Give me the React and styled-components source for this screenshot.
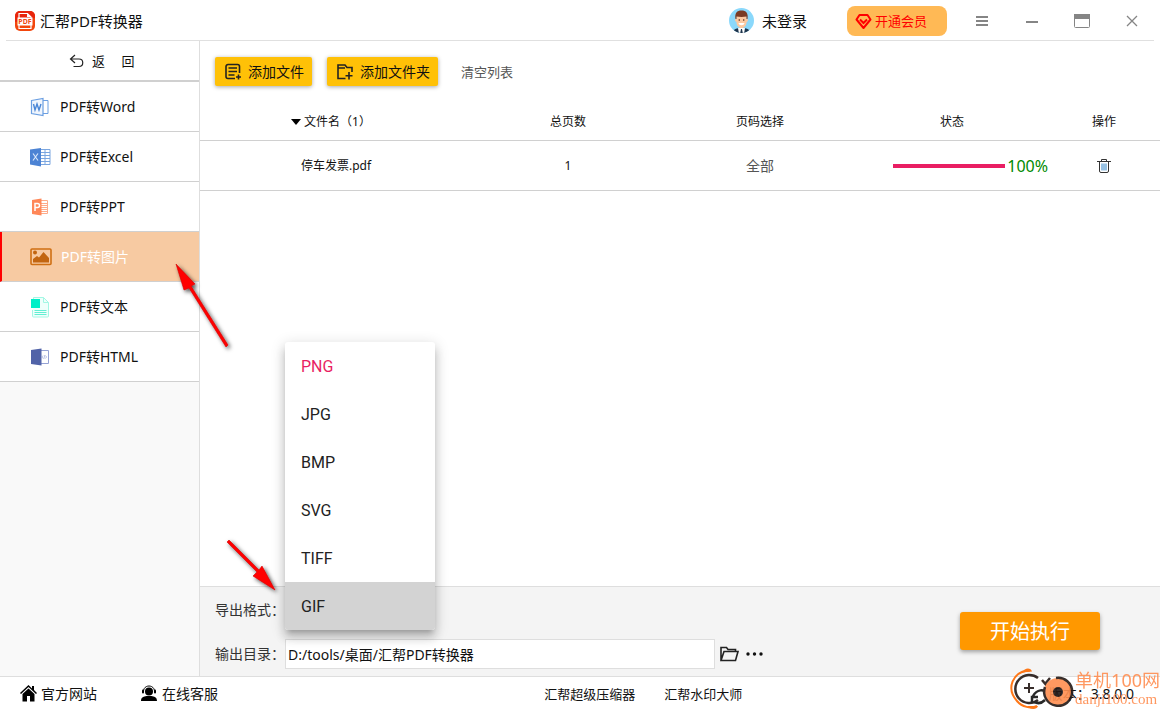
import React, { Component } from 'react';
import styled, { createGlobalStyle, css } from 'styled-components';

const GlobalStyle = createGlobalStyle`
    * {
        box-sizing: border-box;
    }
    body {
        margin: 0;
        background: #fff;
        color: #111;
        font-family: 'Noto Sans', 'Noto Sans CJK SC', sans-serif;
        font-size: 14px;
        line-height: 20px;
    }
    button, input {
        font: inherit;
        color: inherit;
    }
    button {
        padding: 0;
        border: 0;
        background: none;
        cursor: pointer;
    }
    a {
        color: inherit;
        text-decoration: none;
    }
    svg {
        display: block;
        flex: none;
    }
`;

const AppWrap = styled.div`
    position: relative;
    display: flex;
    flex-direction: column;
    height: 100vh;
    overflow: hidden;
`;

const HeaderWrap = styled.header`
    display: flex;
    align-items: center;
    justify-content: space-between;
    flex: none;
    height: 41px;
    margin: 0 6px;
    padding: 2px 3px 0 8px;
    border-bottom: 1px solid #e0e0e0;
    font-size: 15px;
    .title {
        display: flex;
        align-items: center;
        gap: 4px;
        margin: 0;
        font-size: 15px;
        font-weight: 400;
    }
`;

const HeaderRight = styled.div`
    display: flex;
    align-items: center;
`;

const UserBtn = styled.button`
    display: flex;
    align-items: center;
    gap: 8px;
    margin-right: 40px;
`;

const VipBtn = styled.button`
    display: flex;
    align-items: center;
    gap: 3px;
    width: 100px;
    height: 30px;
    margin-right: 10px;
    padding-left: 8px;
    border-radius: 8px;
    background: #ffb955;
    color: #ff0000;
    font-size: 13px;
`;

const WindowBtn = styled.button`
    display: flex;
    align-items: center;
    justify-content: center;
    width: 50px;
    height: 38px;
    color: #858585;
    &:last-child {
        width: 38px;
        margin-left: 6px;
    }
`;

const Body = styled.div`
    display: flex;
    flex: 1;
    min-height: 0;
`;

const Sidebar = styled.nav`
    flex: none;
    width: 200px;
    border-right: 1px solid #dedede;
    background: #f9f9f9;
`;

const BackBtn = styled.button`
    display: flex;
    align-items: center;
    gap: 7px;
    width: 100%;
    height: 41px;
    padding-left: 69px;
    border-bottom: 2px solid #d0d0d0;
    background: #fff;
    font-size: 13px;
`;

const MenuItem = styled.a`
    display: flex;
    align-items: center;
    gap: 9px;
    height: 50px;
    padding: 1px 0 0 29px;
    border-bottom: 1px solid #d0d0d0;
    background: #fff;
    ${({ $active }) =>
        $active &&
        css`
            padding-left: 27px;
            border-left: 2px solid #ff0000;
            background: #f7caa2;
            color: #fff;
        `}
`;

const Main = styled.main`
    display: flex;
    flex: 1;
    flex-direction: column;
    min-width: 0;
`;

const Toolbar = styled.div`
    display: flex;
    align-items: center;
    gap: 15px;
    padding: 16px 15px;
    .clear {
        margin-left: 8px;
        color: #555;
        font-size: 13px;
    }
`;

const AddBtn = styled.button`
    display: flex;
    align-items: center;
    gap: 6px;
    height: 29px;
    padding: 0 8px 0 9px;
    border-radius: 2px;
    background: #ffc107;
    box-shadow: 0 1px 4px rgba(0, 0, 0, 0.35);
`;

const FileTable = styled.table`
    width: 100%;
    border-collapse: collapse;
    table-layout: fixed;
    font-size: 12px;
    th, td {
        padding: 1px 0 0;
        border-bottom: 1px solid #d0d0d0;
        text-align: center;
        font-weight: 400;
    }
    th {
        height: 38px;
        padding-top: 2px;
    }
    td {
        height: 50px;
    }
    .w20 {
        width: 20%;
    }
    .action {
        width: 112px;
    }
    .sort {
        display: inline-flex;
        align-items: center;
        gap: 3px;
        padding-right: 10px;
    }
    .pages {
        color: #555;
        font-size: 14px;
    }
`;

const Progress = styled.div`
    display: flex;
    align-items: center;
    gap: 2px;
    padding-left: 37px;
    color: #008a00;
    font-size: 16px;
    .track {
        flex: 1;
        height: 4px;
    }
    .bar {
        height: 4px;
        background: #e91e63;
    }
`;

const TrashBtn = styled.button`
    vertical-align: middle;
`;

const ExportPanel = styled.section`
    display: flex;
    align-items: center;
    justify-content: space-between;
    margin-top: auto;
    padding: 3px 60px 7px 15px;
    border-top: 1px solid #dedede;
    background: #f4f4f4;
`;

const Fields = styled.div`
    display: flex;
    flex: 1;
    flex-direction: column;
    gap: 9px;
`;

const Field = styled.div`
    display: flex;
    align-items: center;
    min-height: 30px;
    .label {
        flex: none;
        width: 70px;
        color: #333;
    }
    input {
        width: 430px;
        height: 30px;
        padding: 0 2px;
        border: 1px solid #dedede;
        background: #fff;
    }
    .browse {
        margin-left: 5px;
    }
    .more {
        margin-left: 7px;
    }
`;

const FormatSelect = styled.div`
    position: relative;
    width: 150px;
    height: 40px;
`;

const FormatList = styled.div`
    position: absolute;
    bottom: 0;
    left: 0;
    z-index: 5;
    width: 100%;
    overflow: hidden;
    border-radius: 3px;
    background: #fff;
    box-shadow: 0 5px 5px -3px rgba(0, 0, 0, 0.2), 0 8px 10px 1px rgba(0, 0, 0, 0.14),
        0 3px 14px 2px rgba(0, 0, 0, 0.12);
`;

const FormatOption = styled.button`
    display: block;
    width: 100%;
    height: 48px;
    padding: 2px 16px 0;
    background: ${({ $hovered }) => ($hovered ? '#d3d3d3' : 'transparent')};
    color: ${({ $selected }) => ($selected ? '#e91e63' : '#222')};
    font-family: Roboto, sans-serif;
    font-size: 16px;
    text-align: left;
`;

const StartBtn = styled.button`
    width: 140px;
    height: 38px;
    margin-top: 2px;
    padding-top: 2px;
    border-radius: 3px;
    background: #ff9800;
    box-shadow: 0 2px 4px rgba(0, 0, 0, 0.35);
    color: #fff;
    font-size: 20px;
`;

const FooterWrap = styled.footer`
    display: flex;
    align-items: center;
    justify-content: space-between;
    flex: none;
    height: 34px;
    padding: 0 26px 0 20px;
    border-top: 1px solid #dedede;
    .products {
        margin-left: 20px;
    }
`;

const FooterGroup = styled.div`
    display: flex;
    align-items: center;
    gap: ${({ $gap }) => $gap}px;
    font-size: ${({ $small }) => ($small ? 13 : 14)}px;
    a {
        display: flex;
        align-items: center;
        gap: 4px;
    }
`;

const Arrows = styled.svg`
    position: absolute;
    top: 0;
    left: 0;
    z-index: 10;
    pointer-events: none;
`;

const Watermark = styled.div`
    position: absolute;
    right: 0;
    bottom: 0;
    z-index: 10;
    display: flex;
    align-items: center;
    gap: 1px;
    color: #ff8d50;
    font-size: 18px;
    line-height: 20px;
    opacity: 0.9;
    pointer-events: none;
    .site {
        font-family: 'Liberation Serif', serif;
        font-size: 15px;
        line-height: 18px;
    }
`;

const LogoIcon = () => (
    <svg width="22" height="22" viewBox="0 0 22 22">
        <rect x="1" y="1" width="20" height="20" rx="5" fill="#f2460d" />
        <path d="M1 6a5 5 0 0 1 5-5h10a5 5 0 0 1 5 5v2L1 12z" fill="#e8250c" />
        <path d="M5 8V3.5h8.500L17 7v1M5 15v3.500h12V15" fill="none" stroke="#fff" strokeWidth="1.200" />
        <path d="M13 3.500V7h4z" fill="#fff" />
        <rect x="3.500" y="7.500" width="15" height="8" fill="#fff" />
        <text x="11" y="14" textAnchor="middle" fontSize="7" fontWeight="700" fill="#f2460d">
            PDF
        </text>
    </svg>
);

const AvatarIcon = () => (
    <svg width="25" height="26" viewBox="0 0 25 26">
        <defs>
            <clipPath id="avatar">
                <circle cx="12.500" cy="12.500" r="12.500" />
            </clipPath>
        </defs>
        <g clipPath="url(#avatar)">
            <rect width="25" height="26" fill="#8ad8fb" />
            <path d="M4 26c0-5 3-6 8.500-6s8.500 1 8.500 6z" fill="#1d344c" />
            <path d="M9 20h7l-1 6h-5z" fill="#fff" />
            <path d="M12 21h1l1 5h-3z" fill="#1d344c" />
            <path d="M6 12c0-1 1-1 1-1h11s1 0 1 1-1 2-1.500 2C16 18 14 20 12.500 20S9 18 8.500 14C7 14 6 13 6 12z" fill="#fcc9a1" />
            <path d="M7.500 8h10v6c0 4-3 6-5 6s-5-2-5-6z" fill="#fcc9a1" />
            <path d="M6.500 11C5.500 5 8 2.500 12.500 2.500S19.500 5 18.500 11h-1V8.500c-3 .5-7 .5-10 0V11z" fill="#7a3b24" />
            <circle cx="10.300" cy="12" r=".8" fill="#4a2a1b" />
            <circle cx="14.700" cy="12" r=".8" fill="#4a2a1b" />
            <path d="M9.500 15h6c-.5 3-5.500 3-6 0z" fill="#fff" />
        </g>
    </svg>
);

const VipIcon = () => (
    <svg width="17" height="17" viewBox="0 0 17 17" fill="none" stroke="#ff0000" strokeWidth="2">
        <path d="M4.500 2h8L15.500 6.500 8.500 15 1.500 6.500z" strokeLinejoin="round" />
        <path d="M5 6.500l3.500 3.500L12 6.500" />
    </svg>
);

const BackIcon = () => (
    <svg width="16" height="14" viewBox="0 0 16 14" fill="none" stroke="#222" strokeWidth="1.200">
        <path d="M6 1L1.500 5 6 9M1.500 5H10c5 0 5 7.500 0 7.500H4.500" />
    </svg>
);

// 오피스 문서 모양 : 왼쪽 표지 + 오른쪽 종이
const DocIcon = ({ type }) => {
    if (type === 'word') {
        return (
            <svg width="22" height="20" viewBox="0 0 22 20" fill="none" stroke="#6b9fe2">
                <path d="M2.500 3.500L14 1.500v17l-11.500-2z" fill="#f1f6fd" strokeWidth="1.200" />
                <path d="M14 3.500h5v13h-5" />
                <path d="M4.500 7l1.500 6 2-6 2 6 2-6" stroke="#4a86d6" strokeWidth="1.400" />
            </svg>
        );
    }
    if (type === 'excel') {
        return (
            <svg width="22" height="20" viewBox="0 0 22 20">
                <path d="M11 2.500h10v15H11z" fill="#fff" stroke="#7ba6e0" />
                <path d="M11 5.500h10M11 8.500h10M11 11.500h10M11 14.500h10M16 2.500v15" stroke="#7ba6e0" />
                <path d="M1 2.500L12 1v18.500L1 17.500z" fill="#4c83d4" />
                <path d="M4 6.500l5 7M9 6.500l-5 7" stroke="#d8e6fa" strokeWidth="1.200" />
            </svg>
        );
    }
    if (type === 'ppt') {
        return (
            <svg width="22" height="20" viewBox="0 0 22 20">
                <path d="M11 3.500h7.500v13H11z" fill="#fff" stroke="#ffab8b" />
                <path d="M12 6.500h6M12 8.500h6M12 10.500h6M12 12.500h6M12 14.500h6" stroke="#ffab8b" />
                <path d="M3 3l9.500-1.500v17L3 17z" fill="#ff8758" />
                <path d="M6 14V6.500h2.500a2 2 0 0 1 0 4H6" fill="none" stroke="#fff" strokeWidth="1.500" />
            </svg>
        );
    }
    if (type === 'image') {
        return (
            <svg width="23" height="20" viewBox="0 0 23 20">
                <rect x="2" y="2" width="20" height="15.500" rx="1" fill="none" stroke="#cf6f13" strokeWidth="1.600" />
                <circle cx="6" cy="5.500" r="2" fill="#c26510" />
                <path d="M4 15.500V12l4-3 2 1.500L14.500 5l5.500 6v4.500z" fill="#c26510" />
            </svg>
        );
    }
    if (type === 'text') {
        return (
            <svg width="22" height="22" viewBox="0 0 22 22">
                <path d="M4.500 8V1.500h10l5 5v13.500a1 1 0 0 1-1 1h-14a1 1 0 0 1-1-1V14" fill="#effffb" stroke="#a4f7e4" />
                <path d="M14.500 1.500v5h5" fill="none" stroke="#a4f7e4" />
                <path d="M5.500 14.500h12M5.500 16.500h12M5.500 18.500h12" stroke="#62efd3" />
                <rect x="2" y="3" width="9" height="9" fill="#00efc8" />
            </svg>
        );
    }
    return (
        <svg width="22" height="20" viewBox="0 0 22 20">
            <path d="M11 3.500h8.500v13H11z" fill="#fff" stroke="#95a2d4" />
            <path d="M14 8.500l-1 1.500 1 1.500M16.500 8.500l1 1.500-1 1.500M15.800 8l-1 4" fill="none" stroke="#a8b2dc" strokeWidth=".8" />
            <path d="M2 3l10.500-1.500v17L2 17z" fill="#5163a8" />
        </svg>
    );
};

const AddFileIcon = () => (
    <svg width="18" height="18" viewBox="0 0 18 18" fill="none" stroke="#222" strokeWidth="1.600">
        <path d="M15.500 10V3.500a2 2 0 0 0-2-2H4a2 2 0 0 0-2 2v10a2 2 0 0 0 2 2h7M4.500 5h8.500M4.500 8.500h8.500M4.500 12h6M14.500 11.500v5M12 14h5" />
    </svg>
);

const AddFolderIcon = () => (
    <svg width="18" height="18" viewBox="0 0 18 18" fill="none" stroke="#222" strokeWidth="1.600">
        <path d="M16 9V4.500h-5L9 2H2v13.500h7.500M2 5h7M13 9v7.500M9.500 12.700h7" />
    </svg>
);

const TrashIcon = () => (
    <svg width="14" height="16" viewBox="0 0 14 16" fill="none" stroke="#333">
        <path d="M0 3.500h14M4.500 3V1.500h5V3" />
        <path d="M2.500 3.500V13a1.500 1.500 0 0 0 1.500 1.500h6a1.500 1.500 0 0 0 1.500-1.500V3.500" />
        <path d="M5 5.500v7M7 5.500v7M9 5.500v7" stroke="#5298d0" strokeWidth="1.200" />
    </svg>
);

const FolderIcon = () => (
    <svg width="19" height="16" viewBox="0 0 19 16" fill="none" stroke="#222" strokeWidth="1.600">
        <path d="M1 14V1.500h5.500L8 3.500h7.500v2M1 14.500L4 5.500h14l-2.500 9z" />
    </svg>
);

const HomeIcon = () => (
    <svg width="17" height="17" viewBox="0 0 17 17" fill="#000">
        <path d="M8.500 0L0 8l1 1 7.500-7L16 9l1-1-3-3V1h-2v2.500z" />
        <path d="M8.500 3.500L2.500 9v7.500H7V11h3v5.500h4.500V9z" />
    </svg>
);

const ServiceIcon = () => (
    <svg width="18" height="17" viewBox="0 0 18 17">
        <path d="M3.500 7C3 -1 15 -1 14.500 7" fill="none" stroke="#000" />
        <rect x="2" y="4.500" width="2" height="4" rx="1" />
        <rect x="14" y="4.500" width="2" height="4" rx="1" />
        <circle cx="9" cy="6.500" r="4" />
        <path d="M1 16c0-4 3-4.500 5.500-5h5c2.500.5 5.500 1 5.500 5z" />
    </svg>
);

const WatermarkLogo = () => (
    <svg width="64" height="42" viewBox="0 0 64 42" fill="none">
        <path d="M20 2.500C2 3 -4 21 7 33c5 6 14 8 20 5" stroke="#ff6a00" strokeWidth="2" />
        <path d="M12 4.500C15-1 21-.5 22 3.500zM17 38c4 4.500 10 3.500 11 0z" fill="#ff6a00" />
        <path d="M28 10A14 14 0 1 0 28 32" stroke="#231815" strokeWidth="2.500" />
        <path d="M19 15v10M14 20h10" stroke="#231815" strokeWidth="2" />
        <path d="M32 12l5 6M40 10l-5 6" stroke="#231815" strokeWidth="2.500" />
        <path d="M22 35v-6h6M23 28c4-7 11-7 14-3M24 34c4 2 8 1 11-2" stroke="#111" strokeWidth="2.500" />
        <circle cx="48" cy="24" r="14" fill="#ff8f50" />
        <path d="M46 10a14 14 0 1 1-11 9" stroke="#231815" strokeWidth="2.500" />
        <circle cx="48" cy="24" r="5" fill="#231815" />
    </svg>
);

const menus = [
    { type: 'word', name: 'PDF转Word' },
    { type: 'excel', name: 'PDF转Excel' },
    { type: 'ppt', name: 'PDF转PPT' },
    { type: 'image', name: 'PDF转图片' },
    { type: 'text', name: 'PDF转文本' },
    { type: 'html', name: 'PDF转HTML' }
];

const formats = ['PNG', 'JPG', 'BMP', 'SVG', 'TIFF', 'GIF'];

const files = [{ name: '停车发票.pdf', total: 1, pages: '全部', percent: 100 }];

class App extends Component {
    constructor(props) {
        super(props);
        this.state = {
            menu: 'image',
            format: 'PNG',
            hovered: 'GIF',
            outputDir: 'D:/tools/桌面/汇帮PDF转换器'
        };
        this.changeDir = this.changeDir.bind(this);
    }
    changeDir(e) {
        this.setState({
            outputDir: e.target.value
        });
    }
    renderHeader() {
        return (
            <HeaderWrap>
                <h1 className="title">
                    <LogoIcon />
                    汇帮PDF转换器
                </h1>
                <HeaderRight>
                    <UserBtn>
                        <AvatarIcon />
                        未登录
                    </UserBtn>
                    <VipBtn>
                        <VipIcon />
                        开通会员
                    </VipBtn>
                    <WindowBtn aria-label="菜单">
                        <svg width="12" height="12" fill="none" stroke="currentColor" strokeWidth="2">
                            <path d="M0 2h12M0 6h12M0 10h12" />
                        </svg>
                    </WindowBtn>
                    <WindowBtn aria-label="最小化">
                        <svg width="12" height="12" fill="none" stroke="currentColor" strokeWidth="2">
                            <path d="M0 7h12" />
                        </svg>
                    </WindowBtn>
                    <WindowBtn aria-label="最大化">
                        <svg width="16" height="14" fill="none" stroke="currentColor">
                            <rect x=".5" y=".5" width="15" height="13" rx="1" />
                            <path d="M0 2.500h16" strokeWidth="5" />
                        </svg>
                    </WindowBtn>
                    <WindowBtn aria-label="关闭">
                        <svg width="12" height="12" fill="none" stroke="currentColor" strokeWidth="1.300">
                            <path d="M1 1l10 10M11 1L1 11" />
                        </svg>
                    </WindowBtn>
                </HeaderRight>
            </HeaderWrap>
        );
    }
    renderExport() {
        const { format, hovered, outputDir } = this.state;
        return (
            <ExportPanel>
                <Fields>
                    <Field>
                        <span className="label" id="formatLabel">
                            导出格式：
                        </span>
                        <FormatSelect>
                            <FormatList role="listbox" aria-labelledby="formatLabel">
                                {formats.map(item => (
                                    <FormatOption
                                        key={item}
                                        role="option"
                                        aria-selected={item === format}
                                        $selected={item === format}
                                        $hovered={item === hovered}
                                        onMouseEnter={() => this.setState({ hovered: item })}
                                        onClick={() => this.setState({ format: item })}
                                    >
                                        {item}
                                    </FormatOption>
                                ))}
                            </FormatList>
                        </FormatSelect>
                    </Field>
                    <Field>
                        <label className="label" htmlFor="outputDir">
                            输出目录：
                        </label>
                        <input id="outputDir" type="text" value={outputDir} onChange={this.changeDir} />
                        <button className="browse" aria-label="打开目录">
                            <FolderIcon />
                        </button>
                        <button className="more" aria-label="更多">
                            <svg width="17" height="4" fill="#111">
                                <circle cx="2" cy="2" r="1.700" />
                                <circle cx="8.500" cy="2" r="1.700" />
                                <circle cx="15" cy="2" r="1.700" />
                            </svg>
                        </button>
                    </Field>
                </Fields>
                <StartBtn>开始执行</StartBtn>
            </ExportPanel>
        );
    }
    render() {
        const { menu } = this.state;
        return (
            <AppWrap>
                <GlobalStyle />
                {this.renderHeader()}
                <Body>
                    <Sidebar>
                        <BackBtn>
                            <BackIcon />
                            {'返\u3000\u00a0回'}
                        </BackBtn>
                        {menus.map(({ type, name }) => (
                            <MenuItem
                                key={type}
                                href={`#${type}`}
                                $active={type === menu}
                                onClick={() => this.setState({ menu: type })}
                            >
                                <DocIcon type={type} />
                                {name}
                            </MenuItem>
                        ))}
                    </Sidebar>
                    <Main>
                        <Toolbar>
                            <AddBtn>
                                <AddFileIcon />
                                添加文件
                            </AddBtn>
                            <AddBtn>
                                <AddFolderIcon />
                                添加文件夹
                            </AddBtn>
                            <button className="clear">清空列表</button>
                        </Toolbar>
                        <FileTable>
                            <thead>
                                <tr>
                                    <th>
                                        <span className="sort">
                                            <svg width="10" height="6">
                                                <path d="M0 0h10L5 6z" />
                                            </svg>
                                            文件名（{files.length}）
                                        </span>
                                    </th>
                                    <th className="w20">总页数</th>
                                    <th className="w20">页码选择</th>
                                    <th className="w20">状态</th>
                                    <th className="action">操作</th>
                                </tr>
                            </thead>
                            <tbody>
                                {files.map(({ name, total, pages, percent }) => (
                                    <tr key={name}>
                                        <td>{name}</td>
                                        <td>{total}</td>
                                        <td className="pages">{pages}</td>
                                        <td>
                                            <Progress>
                                                <div className="track">
                                                    <div className="bar" style={{ width: `${percent}%` }} />
                                                </div>
                                                {percent}%
                                            </Progress>
                                        </td>
                                        <td>
                                            <TrashBtn aria-label="删除">
                                                <TrashIcon />
                                            </TrashBtn>
                                        </td>
                                    </tr>
                                ))}
                            </tbody>
                        </FileTable>
                        {this.renderExport()}
                    </Main>
                </Body>
                <FooterWrap>
                    <FooterGroup $gap={43}>
                        <a href="#home">
                            <HomeIcon />
                            官方网站
                        </a>
                        <a href="#service">
                            <ServiceIcon />
                            在线客服
                        </a>
                    </FooterGroup>
                    <FooterGroup className="products" $gap={29} $small>
                        <a href="#compress">汇帮超级压缩器</a>
                        <a href="#watermark">汇帮水印大师</a>
                    </FooterGroup>
                    <FooterGroup $gap={4}>版本：3.8.0.0</FooterGroup>
                </FooterWrap>
                <Watermark>
                    <WatermarkLogo />
                    <div>
                        <div>单机100网</div>
                        <div className="site">danji100.com</div>
                    </div>
                </Watermark>
                <Arrows width="290" height="600" viewBox="0 0 290 600">
                    <defs>
                        <filter id="shadow" x="-30%" y="-30%" width="160%" height="160%">
                            <feDropShadow dx="2" dy="2" stdDeviation="2" floodOpacity="0.7" />
                        </filter>
                    </defs>
                    <g filter="url(#shadow)" fill="#ff0000" stroke="#d00808" strokeWidth=".6">
                        <path d="M176 264l19 20-4 2 37 59-2 2-37-59-5 2z" />
                        <path d="M275 590l-22-14 4-4-30-30 2-2 30 30 3-4z" />
                    </g>
                </Arrows>
            </AppWrap>
        );
    }
}

export default App;
